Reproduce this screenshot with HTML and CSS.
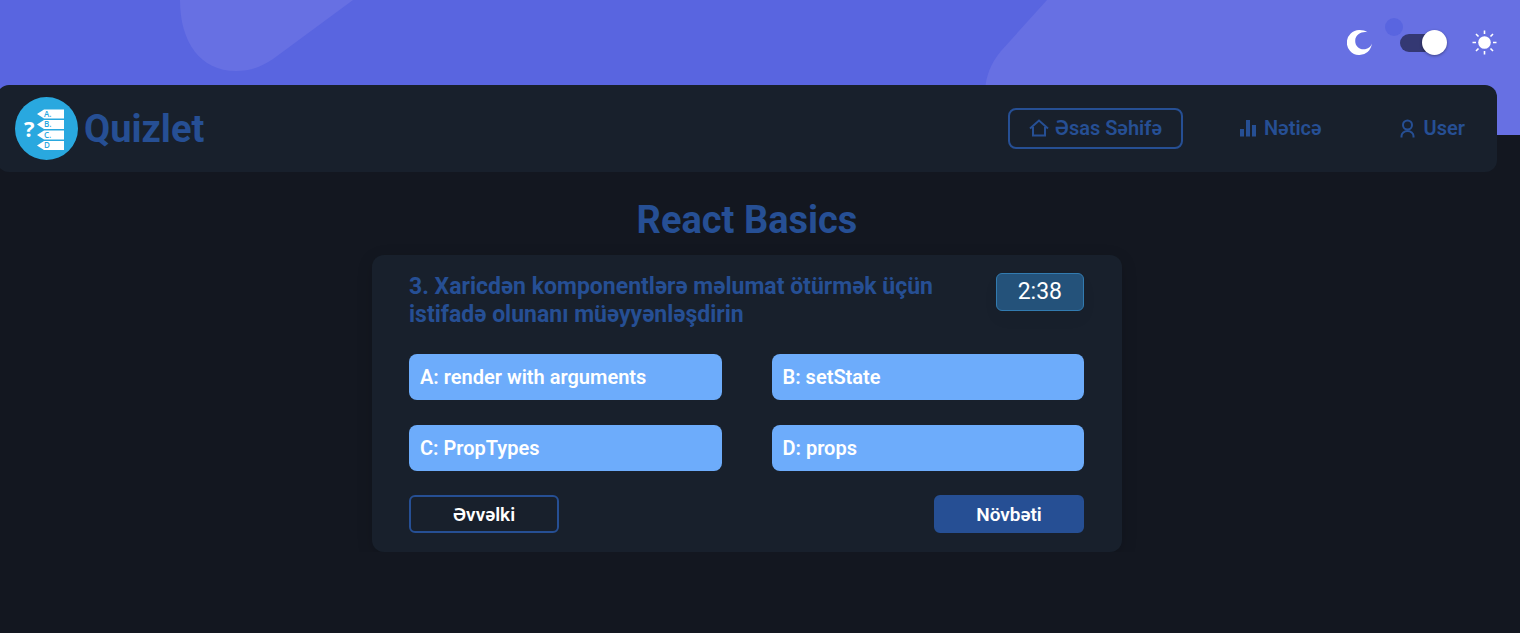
FILE: index.html
```html
<!DOCTYPE html>
<html lang="az">
<head>
<meta charset="utf-8">
<meta name="viewport" content="width=device-width, initial-scale=1">
<title>Quizlet</title>
<link rel="stylesheet" href="styles.css">
</head>
<body>
<svg class="backdrop" viewBox="0 0 1520 135" preserveAspectRatio="xMaxYMin slice" aria-hidden="true">
  <rect width="1520" height="135" fill="#5965e0"/>
  <path d="M180 0C180 42 200 71 236 71C250 71 261 67 273 59L353 0Z" fill="#6770e3"/>
  <path d="M1047 0L1001 51C990 64 986 77 985 90V135H1520V0Z" fill="#6770e3"/>
  <circle cx="1394" cy="27" r="9" fill="#5965e0"/>
</svg>

<div class="theme-bar">
  <svg class="theme-icon" viewBox="0 0 25 25" aria-hidden="true"><path d="M20.500 2.300C16 1 8.200 3.500 8.200 11C8.200 16 12 19.300 16.500 19.300C21 19.300 24 16.500 24.800 13.500A12.500 12.500 0 1 1 12.500 0C15.500 0 18.500 .8 20.500 2.300Z" fill="#fff"/></svg>
  <input class="switch" type="checkbox" role="switch" aria-label="Tema" checked>
  <svg class="theme-icon" viewBox="0 0 25 25" aria-hidden="true"><circle cx="12.500" cy="12.500" r="6.300" fill="#fff"/><path d="M12.500 .5V4M12.500 21V24.500M.5 12.500H4M21 12.500H24.500M4 4L6.500 6.500M18.500 18.500L21 21M21 4L18.500 6.500M6.500 18.500L4 21" stroke="#fff" stroke-width="1.600"/></svg>
</div>

<div class="page">
  <header class="header">
    <a class="brand" href="#">
      <svg class="logo" viewBox="0 0 63 63" aria-hidden="true">
        <circle cx="31.500" cy="31.500" r="31.500" fill="#29a8df"/>
        <path d="M22 17L29 12.500H49V21.500H29ZM22 27.500L29 23H49V32H29ZM22 38L29 33.500H49V42.500H29ZM22 48.500L29 44H49V53H29Z" fill="#fff"/>
        <text class="logo-mark" x="9" y="40">?</text>
        <g class="logo-letters">
          <text x="29" y="20">A.</text>
          <text x="29" y="30">B.</text>
          <text x="29" y="41">C.</text>
          <text x="29" y="51">D</text>
        </g>
      </svg>
      <span>Quizlet</span>
    </a>
    <nav class="nav">
      <a class="nav-link nav-link-active" href="#">
        <svg viewBox="0 0 20 20" aria-hidden="true"><path d="M1 9.500L10 1.500L19 9.500M4 8V16.500H16V8" fill="none" stroke="currentColor" stroke-width="2"/></svg>
        <span>Əsas Səhifə</span>
      </a>
      <a class="nav-link" href="#">
        <svg viewBox="0 0 20 20" aria-hidden="true"><path d="M2 10H6V17.500H2ZM8 1H12V17.500H8ZM14 6H18V17.500H14Z" fill="currentColor"/></svg>
        <span>Nəticə</span>
      </a>
      <a class="nav-link" href="#">
        <svg viewBox="0 0 20 20" aria-hidden="true"><circle cx="9.500" cy="6" r="4.500" fill="none" stroke="currentColor" stroke-width="2"/><path d="M3.500 18.500V17A6 5 0 0 1 15.500 17V18.500" fill="none" stroke="currentColor" stroke-width="2"/></svg>
        <span>User</span>
      </a>
    </nav>
  </header>

  <main class="quiz">
    <h1 class="quiz-title">React Basics</h1>
    <section class="card">
      <div class="card-head">
        <h2 class="question">3. Xaricdən komponentlərə məlumat ötürmək üçün istifadə olunanı müəyyənləşdirin</h2>
        <div class="timer">2:38</div>
      </div>
      <div class="answers">
        <button class="answer" type="button">A: render with arguments</button>
        <button class="answer" type="button">B: setState</button>
        <button class="answer" type="button">C: PropTypes</button>
        <button class="answer" type="button">D: props</button>
      </div>
      <div class="steps">
        <button class="step" type="button">Əvvəlki</button>
        <button class="step step-next" type="button">Növbəti</button>
      </div>
    </section>
  </main>
</div>
</body>
</html>
```

FILE: styles.css
```css
* {
  box-sizing: border-box;
}

body {
  margin: 0;
  background: #131720;
  color: #264f94;
  font-family: Roboto, "Liberation Sans", sans-serif;
}

button {
  font: inherit;
  cursor: pointer;
}

.backdrop {
  position: absolute;
  top: 0;
  left: 0;
  z-index: -1;
  width: 100%;
  height: 135px;
}

.theme-bar {
  display: flex;
  justify-content: flex-end;
  align-items: center;
  gap: 25px;
  height: 85px;
  padding-right: 23px;
}

.theme-icon {
  width: 25px;
  height: 25px;
}

.switch {
  display: flex;
  align-items: center;
  justify-content: flex-end;
  width: 50px;
  height: 25px;
  margin: 0;
  appearance: none;
  cursor: pointer;
}

.switch::before {
  content: "";
  width: 47px;
  height: 18px;
  border-radius: 9px;
  background: #343873;
}

.switch::after {
  content: "";
  width: 25px;
  height: 25px;
  margin-left: -25px;
  border-radius: 50%;
  background: #fff;
  box-shadow: 0 1px 3px rgba(0, 0, 0, 0.4);
}

.page {
  padding-right: 26px;
  overflow-x: clip;
}

.header {
  display: flex;
  justify-content: space-between;
  align-items: center;
  margin: 0 -3px;
  padding: 12px 11px 12px 18px;
  border-radius: 12px;
  background: #18202c;
}

.brand {
  display: flex;
  align-items: center;
  gap: 6px;
  color: inherit;
  font-size: 38px;
  font-weight: 700;
  text-decoration: none;
}

.logo {
  width: 63px;
  height: 63px;
}

.logo-mark {
  fill: #fff;
  font-family: "Open Sans", sans-serif;
  font-size: 22px;
  font-weight: 700;
}

.logo-letters {
  fill: #29a8df;
  font-family: "Open Sans", sans-serif;
  font-size: 8px;
  font-weight: 600;
}

.nav {
  display: flex;
  gap: 34px;
}

.nav-link {
  display: flex;
  align-items: center;
  gap: 6px;
  padding: 7px 19px;
  border: 2px solid transparent;
  border-radius: 8px;
  color: inherit;
  font-size: 20px;
  font-weight: 600;
  line-height: 23px;
  text-decoration: none;
}

.nav-link svg {
  width: 20px;
  height: 20px;
}

.nav-link-active {
  border-color: #264f94;
}

.quiz {
  max-width: 750px;
  margin: 0 auto;
  padding-top: 25px;
}

.quiz-title {
  margin: 0 0 12px;
  font-size: 38px;
  line-height: 46px;
  text-align: center;
}

.card {
  padding: 18px 38px 19px 37px;
  border-radius: 12px;
  background: #18202c;
  box-shadow: 0 4px 16px rgba(0, 0, 0, 0.15);
}

.card-head {
  display: flex;
  justify-content: space-between;
  align-items: flex-start;
  gap: 24px;
}

.question {
  margin: 0;
  font-size: 23px;
  font-weight: 700;
  line-height: 28px;
}

.timer {
  flex: none;
  padding: 4px 21px;
  border: 1px solid #327bb0;
  border-radius: 6px;
  background: #24527a;
  box-shadow: 0 8px 16px rgba(0, 0, 0, 0.04);
  color: #fff;
  font-size: 23px;
  line-height: 28px;
}

.answers {
  display: grid;
  grid-template-columns: 1fr 1fr;
  gap: 25px 50px;
  padding: 25px 0 24px;
}

.answer {
  padding: 11px;
  border: 0;
  border-radius: 8px;
  background: #6dacfb;
  color: #fff;
  font-size: 20px;
  font-weight: 600;
  line-height: 24px;
  text-align: left;
}

.steps {
  display: flex;
  justify-content: space-between;
}

.step {
  width: 150px;
  padding: 7px 6px 5px;
  border: 2px solid #264f94;
  border-radius: 6px;
  background: transparent;
  color: #fff;
  font-size: 19px;
  font-weight: 600;
  line-height: 22px;
}

.step-next {
  background: #264f94;
}
```
